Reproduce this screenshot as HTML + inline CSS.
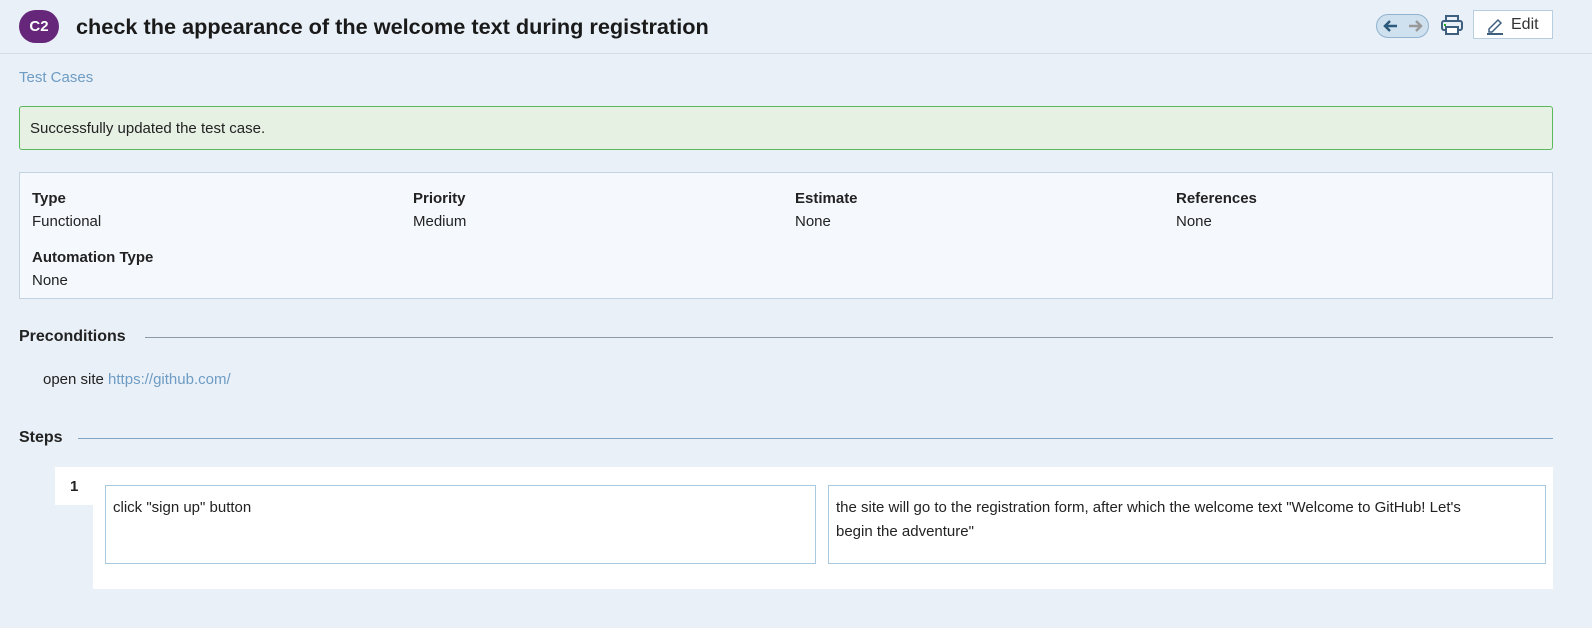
<!DOCTYPE html><html><head><style>
body{margin:0;width:1592px;height:628px;background:#e9f0f7;font-family:"Liberation Sans",sans-serif;color:#222;position:relative;overflow:hidden;font-size:15px}
.a{position:absolute}
</style></head><body>
<div class="a" style="left:0;top:0;width:1592px;height:53px;border-bottom:1px solid #d2dde8"></div>
<div class="a" style="left:19px;top:10px;width:40px;height:33px;border-radius:17px;background:#66267a;color:#fff;font-weight:bold;font-size:15px;line-height:33px;text-align:center">C2</div>
<div class="a" style="left:76px;top:14px;font-size:21.7px;font-weight:bold;color:#1a1a1a">check the appearance of the welcome text during registration</div>
<div class="a" style="left:1376px;top:14px;width:53px;height:24px;border-radius:12px;background:#cfe0ee;border:1px solid #8fb3d0;box-sizing:border-box"></div>
<svg class="a" style="left:1380px;top:16px" width="46" height="20"><path d="M5 10h12M10 5l-5 5 5 5" stroke="#2d5a7c" stroke-width="2.5" fill="none"/><path d="M29 10h12M36 5l5 5-5 5" stroke="#999" stroke-width="2.5" fill="none"/></svg>
<svg class="a" style="left:1440px;top:13px" width="24" height="24"><rect x="6" y="3" width="12" height="5" fill="none" stroke="#3d5f80" stroke-width="2"/><rect x="2" y="8" width="20" height="9" rx="2" fill="none" stroke="#3d5f80" stroke-width="2"/><rect x="6" y="14" width="12" height="7" fill="#fff" stroke="#3d5f80" stroke-width="2"/><rect x="4" y="11" width="2" height="2" fill="#2a2"/></svg>
<div class="a" style="left:1473px;top:10px;width:80px;height:29px;background:#fff;border:1px solid #b7cde0;box-sizing:border-box"></div>
<svg class="a" style="left:1485px;top:15px" width="20" height="20"><path d="M4 14l9-9 3 3-9 9H4z" fill="none" stroke="#3d5f80" stroke-width="1.5"/><path d="M2 19h16" stroke="#3d5f80" stroke-width="2"/></svg>
<div class="a" style="left:1511px;top:16px;font-size:16px;color:#333">Edit</div>
<div class="a" style="left:19px;top:69px;color:#6e9cc4">Test Cases</div>
<div class="a" style="left:19px;top:106px;width:1534px;height:44px;background:#e6f1e3;border:1px solid #5cb85c;box-sizing:border-box;border-radius:3px;padding:13px 10px;font-size:15px">Successfully updated the test case.</div>
<div class="a" style="left:19px;top:172px;width:1534px;height:127px;background:#f5f9fd;border:1px solid #c3d3e0;box-sizing:border-box"></div>
<div class="a" style="left:32px;top:187px;line-height:23px"><b>Type</b><br>Functional</div>
<div class="a" style="left:413px;top:187px;line-height:23px"><b>Priority</b><br>Medium</div>
<div class="a" style="left:795px;top:187px;line-height:23px"><b>Estimate</b><br>None</div>
<div class="a" style="left:1176px;top:187px;line-height:23px"><b>References</b><br>None</div>
<div class="a" style="left:32px;top:246px;line-height:23px"><b>Automation Type</b><br>None</div>
<div class="a" style="left:19px;top:328px;font-weight:bold;font-size:16px">Preconditions</div>
<div class="a" style="left:145px;top:337px;width:1408px;height:1px;background:#8a9aa8"></div>
<div class="a" style="left:43px;top:371px">open site <span style="color:#6e9cc4">https://github.com/</span></div>
<div class="a" style="left:19px;top:429px;font-weight:bold;font-size:16px">Steps</div>
<div class="a" style="left:78px;top:438px;width:1475px;height:1px;background:#7fa8c8"></div>
<div class="a" style="left:55px;top:467px;width:38px;height:38px;background:#fff"></div>
<div class="a" style="left:70px;top:478px;font-weight:bold">1</div>
<div class="a" style="left:93px;top:467px;width:1460px;height:122px;background:#fff"></div>
<div class="a" style="left:105px;top:485px;width:711px;height:79px;border:1px solid #a9c9e0;box-sizing:border-box;padding:10px 7px;line-height:24px;font-size:15px">click "sign up" button</div>
<div class="a" style="left:828px;top:485px;width:718px;height:79px;border:1px solid #a9c9e0;box-sizing:border-box;padding:10px 7px;line-height:24px;font-size:15px;white-space:nowrap">the site will go to the registration form, after which the welcome text "Welcome to GitHub! Let's<br>begin the adventure"</div>
</body></html>
